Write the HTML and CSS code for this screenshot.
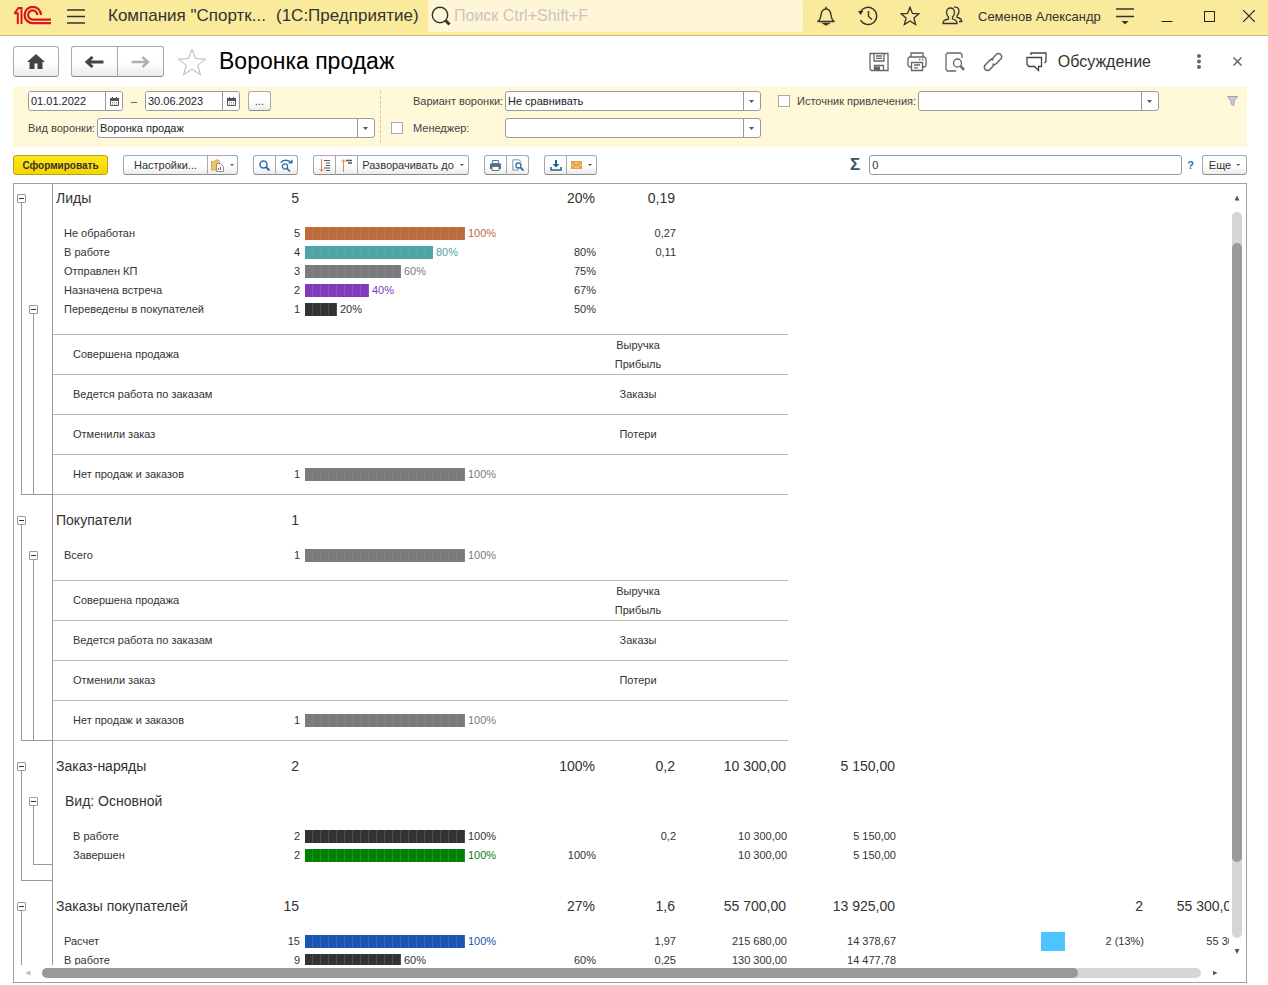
FILE: index.html
```html
<!DOCTYPE html>
<html lang="ru">
<head>
  <meta charset="UTF-8" />
  <meta name="viewport" content="width=device-width, initial-scale=1" />
  <title>Воронка продаж</title>
  <link rel="stylesheet" href="styles.css">
</head>
<body>

  <header class="topbar">
    <svg class="logo" width="38" height="20" viewBox="0 0 38 20" fill="none" stroke="#d9161c">
      <path d="M0 7.200h3.800V18M0 7.200M1 6.500L4.500 2h3v16" stroke-width="2"/>
      <path d="M27 9A8.200 8.200 0 1 0 19 17.200H37" stroke-width="2.200"/>
      <path d="M23.300 9A4.600 4.600 0 1 0 19 13.600H37" stroke-width="2.200"/>
    </svg>
    <button class="icon-btn menu-btn" aria-label="Меню">
      <svg width="18" height="15" viewBox="0 0 18 15" stroke="#333" stroke-width="1.300"><path d="M0 1h18M0 7.500h18M0 14h18"/></svg>
    </button>
    <span class="app-title">Компания "Спортк...</span>
    <span class="app-kind">(1С:Предприятие)</span>
    <label class="search">
      <svg width="20" height="20" viewBox="0 0 20 20" fill="none" stroke="#333"><circle cx="9" cy="9" r="7.700" stroke-width="1.400"/><path d="M14.500 14.500l4 4" stroke-width="3"/></svg>
      <input type="text" placeholder="Поиск Ctrl+Shift+F" aria-label="Поиск">
    </label>
    <button class="icon-btn" aria-label="Уведомления">
      <svg width="20" height="20" viewBox="0 0 20 20" fill="none" stroke="#333" stroke-width="1.400"><path d="M1.500 15.500c2.500-1 3-3 3.500-6.500.4-3.500 2-6 5-6s4.600 2.500 5 6c.5 3.500 1 5.500 3.500 6.500z"/><path d="M10 3V.8"/><path d="M7.500 17.500h5l-2.500 1.500z" fill="#333"/></svg>
    </button>
    <button class="icon-btn" aria-label="История">
      <svg width="20" height="20" viewBox="0 0 20 20" fill="none" stroke="#333" stroke-width="1.400"><path d="M2.200 6.500A8.600 8.600 0 1 1 2.500 14"/><path d="M10.500 5v5.500l3.500 3"/><path d="M0 5h5.500L2.500 9z" fill="#333" stroke="none"/></svg>
    </button>
    <button class="icon-btn" aria-label="Избранное">
      <svg width="20" height="20" viewBox="0 0 20 20" fill="none" stroke="#333" stroke-width="1.300"><path d="M10 1.200l2.400 6.200 6.600.4-5.100 4.200 1.700 6.500L10 14.900l-5.600 3.600 1.700-6.500L1 7.800l6.600-.4z"/></svg>
    </button>
    <button class="icon-btn" aria-label="Пользователи">
      <svg width="21" height="20" viewBox="0 0 21 20" fill="none" stroke="#333" stroke-width="1.300"><path d="M1 17.500h14c0-3-1.500-3.500-4.500-4.500v-2c1.500-1.200 2-2.700 2-4.500C12.500 3.500 10.800 2 8.500 2S4.500 3.500 4.500 6.500c0 1.800.5 3.300 2 4.500v2C2.500 14 1 14.500 1 17.500z"/><path d="M12 1.200c3-.7 5 1 5 4 0 2-.6 3.300-2 4.500v1.500c3 1 4.800 1.500 4.800 4.300H17"/></svg>
    </button>
    <span class="user">Семенов Александр</span>
    <button class="icon-btn" aria-label="Сервис">
      <svg width="18" height="18" viewBox="0 0 18 18"><path d="M0 2h18M0 9.500h18" stroke="#333" stroke-width="1.400"/><path d="M5.500 14h7L9 17.500z" fill="#333"/></svg>
    </button>
    <button class="icon-btn" aria-label="Свернуть">
      <svg width="12" height="14" viewBox="0 0 12 14"><path d="M.5 12.500h11" stroke="#222"/></svg>
    </button>
    <button class="icon-btn" aria-label="Развернуть">
      <svg width="11" height="11" viewBox="0 0 11 11"><rect x=".5" y=".5" width="10" height="10" fill="none" stroke="#222"/></svg>
    </button>
    <button class="icon-btn win-close" aria-label="Закрыть">
      <svg width="12" height="12" viewBox="0 0 12 12"><path d="M0 0l12 12M12 0L0 12" stroke="#222" stroke-width="1.200"/></svg>
    </button>
  </header>

  <main class="page">
    <div class="nav">
      <button class="btn nav-btn" aria-label="Домой">
        <svg width="18" height="15" viewBox="0 0 18 15" fill="#444"><path d="M9 0l9 8h-2.500v7h-5V9.500h-3V15h-5V8H0z"/></svg>
      </button>
      <div class="group nav-group">
        <button class="btn nav-btn" aria-label="Назад">
          <svg width="19" height="12" viewBox="0 0 19 12"><path d="M18.500 6H4M7.500 1L2 6l5.500 5" fill="none" stroke="#444" stroke-width="3"/></svg>
        </button>
        <button class="btn nav-btn" aria-label="Вперед">
          <svg width="19" height="12" viewBox="0 0 19 12"><path d="M.5 6H16M11.500 1L17 6l-5.500 5" fill="none" stroke="#b0b0b0" stroke-width="2.500"/></svg>
        </button>
      </div>
      <button class="star" aria-label="В избранное">
        <svg width="30" height="28" viewBox="0 0 30 28" fill="none" stroke="#b0b6bb"><path d="M15 1.500l3.600 9.200 10 .4-7.900 6.100 2.800 9.600L15 21.300l-8.500 5.500 2.800-9.600-7.900-6.100 10-.4z"/></svg>
      </button>
      <h1>Воронка продаж</h1>
      <button class="icon-btn nav-icon" aria-label="Сохранить">
        <svg width="20" height="20" viewBox="0 0 20 20" fill="none" stroke="#666" stroke-width="1.300"><path d="M1 1.500h18v17H2.500L1 17z"/><path d="M5 1.500v7.500h10V1.500M7 4h6M7 6.300h6M5.500 18.500v-5h9v5"/><path d="M6 14.500h5v4H6z" fill="#666" stroke="none"/></svg>
      </button>
      <button class="icon-btn nav-icon" aria-label="Печать">
        <svg width="20" height="20" viewBox="0 0 20 20" fill="none" stroke="#666" stroke-width="1.300"><path d="M4 5V1h12v4M4.500 15H2.500L1 13.500V6.500L2.500 5h15L19 6.500v7L17.500 15h-2"/><path d="M4.500 10.500h11v8h-11zM7 13h6M7 15.800h4M12 7.500h1.500M15 7.500h1.500"/></svg>
      </button>
      <button class="icon-btn nav-icon" aria-label="Предпросмотр">
        <svg width="20" height="20" viewBox="0 0 20 20" fill="none" stroke="#666" stroke-width="1.300"><path d="M17 6V2.500L15.500 1H2.500L1 2.500v15L2.500 19H11"/><circle cx="12.500" cy="11" r="4"/><path d="M15.500 14l3.500 3.800" stroke-width="2.500"/></svg>
      </button>
      <button class="icon-btn nav-icon" aria-label="Ссылка">
        <svg width="20" height="20" viewBox="0 0 20 20" fill="none" stroke="#666" stroke-width="1.500"><path d="M8.500 7.500l4.700-4.900a3 3 0 0 1 4.500 0 3 3 0 0 1 0 4.500L13.500 11.500c-1.300 1.300-3 1.200-4 .2"/><path d="M11.500 12.500l-4.700 4.900a3 3 0 0 1-4.500 0 3 3 0 0 1 0-4.500L6.500 8.500c1.300-1.300 3-1.200 4-.2"/></svg>
      </button>
      <button class="icon-btn discuss">
        <svg width="21" height="20" viewBox="0 0 21 20" fill="none" stroke="#444" stroke-width="1.300"><path d="M1 5.500h14.500v9H12.500V18.500L8.500 14.500H3L1 12.500z"/><path d="M5 3V1h15v8.500l-1.500 1.500"/></svg>
        Обсуждение
      </button>
      <button class="icon-btn dots" aria-label="Дополнительно">
        <svg width="4" height="15" viewBox="0 0 4 15" fill="#666"><circle cx="2" cy="2" r="2"/><circle cx="2" cy="7.500" r="2"/><circle cx="2" cy="13" r="2"/></svg>
      </button>
      <button class="icon-btn nav-close" aria-label="Закрыть форму">
        <svg width="9" height="9" viewBox="0 0 9 9"><path d="M.5.5l8 8M8.500.5l-8 8" stroke="#666" stroke-width="1.500"/></svg>
      </button>
    </div>

    <div class="filters">
      <div class="filter-col period-col">
        <div class="filter-row">
          <span class="date">
            <input type="text" value="01.01.2022" aria-label="Начало периода">
            <button aria-label="Выбрать дату начала"><svg width="9" height="9" viewBox="0 0 9 9"><path d="M.5 1.500h8v7h-8z" fill="#fff" stroke="#555"/><path d="M0 1h9v3H0zM2 0h1v1H2zM6 0h1v1H6z" fill="#555"/><path d="M2 5.500h5M2 7h5" stroke="#999" stroke-dasharray="1 1"/></svg></button>
          </span>
          <span class="dash">–</span>
          <span class="date">
            <input type="text" value="30.06.2023" aria-label="Конец периода">
            <button aria-label="Выбрать дату окончания"><svg width="9" height="9" viewBox="0 0 9 9"><path d="M.5 1.500h8v7h-8z" fill="#fff" stroke="#555"/><path d="M0 1h9v3H0zM2 0h1v1H2zM6 0h1v1H6z" fill="#555"/><path d="M2 5.500h5M2 7h5" stroke="#999" stroke-dasharray="1 1"/></svg></button>
          </span>
          <button class="btn more-dates">...</button>
        </div>
        <div class="filter-row">
          <label class="kind-label" for="kind">Вид воронки:</label>
          <select id="kind"><option>Воронка продаж</option></select>
        </div>
      </div>
      <div class="divider"></div>
      <div class="filter-col variant-col">
        <div class="filter-row">
          <span class="check-space"></span>
          <label class="variant-label" for="variant">Вариант воронки:</label>
          <select id="variant"><option>Не сравнивать</option></select>
        </div>
        <div class="filter-row">
          <input type="checkbox" aria-label="Отбор по менеджеру">
          <label class="variant-label" for="manager">Менеджер:</label>
          <select id="manager"><option></option></select>
        </div>
      </div>
      <div class="filter-col source-col">
        <div class="filter-row">
          <input type="checkbox" aria-label="Отбор по источнику">
          <label class="source-label" for="source">Источник привлечения:</label>
          <select id="source"><option></option></select>
        </div>
      </div>
      <button class="icon-btn funnel" aria-label="Отборы">
        <svg width="11" height="10" viewBox="0 0 11 10"><path d="M.5.500h10L7 5v4.500L4 8V5z" fill="#c5ccd3" stroke="#9aa5ae"/></svg>
      </button>
    </div>

    <div class="toolbar">
      <button class="btn primary">Сформировать</button>
      <div class="group">
        <button class="btn settings">Настройки...</button>
        <button class="btn wide" aria-label="Варианты настроек">
          <svg width="13" height="13" viewBox="0 0 13 13"><path d="M.5 2.500h3L4.500 1h3l1 1.500V11h-8z" fill="#f3c367" stroke="#d9a548"/><path d="M5.500 4.500h4l3 3v5h-7z" fill="#fff" stroke="#8294a5"/><path d="M7.500 11V9M9.500 11V7.500" stroke="#d04a3a"/></svg>
          <i class="caret"></i>
        </button>
      </div>
      <div class="group">
        <button class="btn small" aria-label="Найти">
          <svg width="11" height="11" viewBox="0 0 11 11" fill="none" stroke="#2a6fa8"><circle cx="4.500" cy="4.500" r="3.500" stroke-width="1.500"/><path d="M7 7l3.500 3.500" stroke-width="2"/></svg>
        </button>
        <button class="btn small" aria-label="Найти далее">
          <svg width="13" height="13" viewBox="0 0 13 13" fill="none" stroke="#2a6fa8"><circle cx="5" cy="7.500" r="2.600" stroke-width="1.200"/><path d="M7 9.500l3 3" stroke-width="1.600"/><path d="M.8 3.500C3.500.5 7.500.6 10 2.800" stroke-width="1.500"/><path d="M7.800 4.500h4.700V.3z" fill="#2a6fa8" stroke="none"/></svg>
        </button>
      </div>
      <div class="group">
        <button class="btn small" aria-label="Развернуть группы">
          <svg width="12" height="13" viewBox="0 0 12 13"><path d="M2.500 0v12M.5 10l2 2.300 2-2.300" fill="none" stroke="#e8824a"/><path d="M5 1.500h6M7 4h4M7 6.500h4M5 9h6M7 11.500h4" stroke="#555"/></svg>
        </button>
        <button class="btn small" aria-label="Свернуть группы">
          <svg width="12" height="13" viewBox="0 0 12 13"><path d="M2.500 1v12M.5 3l2-2.300 2 2.300" fill="none" stroke="#e8824a"/><path d="M5 1.500h6M7 4h4" stroke="#555" stroke-width="1.500"/></svg>
        </button>
        <button class="btn expand">Разворачивать до <i class="caret"></i></button>
      </div>
      <div class="group">
        <button class="btn small" aria-label="Печать отчета">
          <svg width="11" height="11" viewBox="0 0 11 11"><path d="M2.500.5h6v3h-6z" fill="#fff" stroke="#5f7890"/><path d="M0 3.500h11V9H0z" fill="#4d6f92"/><path d="M2 6.500h7v4H2z" fill="#fff" stroke="#5f7890"/></svg>
        </button>
        <button class="btn small" aria-label="Просмотр отчета">
          <svg width="12" height="12" viewBox="0 0 12 12" fill="none"><path d="M7 11H.8V.8h6l3 2.500" stroke="#7c95ab"/><circle cx="6.500" cy="6.500" r="2.500" stroke="#2a6fa8" stroke-width="1.300"/><path d="M8.500 8.500l3 3" stroke="#2a6fa8" stroke-width="1.800"/></svg>
        </button>
      </div>
      <div class="group">
        <button class="btn small" aria-label="Сохранить отчет">
          <svg width="12" height="11" viewBox="0 0 12 11"><path d="M6 0v5" stroke="#20608f" stroke-width="2"/><path d="M2.500 4h7L6 7.500z" fill="#20608f"/><path d="M1 7v3h10V7" fill="none" stroke="#20608f" stroke-width="1.500"/></svg>
        </button>
        <button class="btn wide" aria-label="Отправить">
          <svg width="11" height="8" viewBox="0 0 11 8"><path d="M.5.5h10v7H.5z" fill="#f5c266" stroke="#e0a548"/><path d="M.5.5l5 4 5-4M.5 7.500L4 4M10.500 7.500L7 4" fill="none" stroke="#c98d30"/></svg>
          <i class="caret"></i>
        </button>
      </div>
      <label class="sigma" for="sum">Σ</label>
      <input class="sum" id="sum" type="text" value="0">
      <a class="help" href="#">?</a>
      <button class="btn more">Еще <i class="caret"></i></button>
    </div>

    <div class="report">
      <div class="viewport">
        <table>
          <colgroup>
            <col class="c-tree1"><col class="c-tree2"><col class="c-name"><col class="c-num"><col class="c-bar"><col class="c-conv">
            <col class="c-days"><col class="c-rev"><col class="c-profit"><col class="c-mark"><col class="c-lost"><col class="c-lostsum">
          </colgroup>
          <tbody>
            <tr class="head">
              <td class="branch outer" rowspan="12"><button class="toggle" aria-label="Свернуть"></button></td>
              <td class="inner" rowspan="6"></td>
              <td>Лиды</td><td class="num">5</td><td></td><td class="num">20%</td><td class="num">0,19</td>
            </tr>
            <tr class="sp12"><td colspan="10"></td></tr>
            <tr><td class="lv1">Не обработан</td><td class="num">5</td><td><div class="bar rust"><i style="width:160px"></i>100%</div></td><td></td><td class="num">0,27</td></tr>
            <tr><td class="lv1">В работе</td><td class="num">4</td><td><div class="bar teal"><i style="width:128px"></i>80%</div></td><td class="num">80%</td><td class="num">0,11</td></tr>
            <tr><td class="lv1">Отправлен КП</td><td class="num">3</td><td><div class="bar gray"><i style="width:96px"></i>60%</div></td><td class="num">75%</td></tr>
            <tr><td class="lv1">Назначена встреча</td><td class="num">2</td><td><div class="bar violet"><i style="width:64px"></i>40%</div></td><td class="num">67%</td></tr>
            <tr>
              <td class="branch inner low" rowspan="6"><button class="toggle" aria-label="Свернуть"></button></td>
              <td class="lv1">Переведены в покупателей</td><td class="num">1</td><td><div class="bar dark"><i style="width:32px"></i>20%</div></td><td class="num">50%</td>
            </tr>
            <tr class="sp16"><td class="rule" colspan="6"></td></tr>
            <tr class="tall"><td class="lv2 rule" colspan="4">Совершена продажа</td><td class="mid rule">Выручка<br>Прибыль</td><td class="rule"></td></tr>
            <tr class="tall"><td class="lv2 rule" colspan="4">Ведется работа по заказам</td><td class="mid rule">Заказы</td><td class="rule"></td></tr>
            <tr class="tall"><td class="lv2 rule" colspan="4">Отменили заказ</td><td class="mid rule">Потери</td><td class="rule"></td></tr>
            <tr class="tall"><td class="lv2 rule">Нет продаж и заказов</td><td class="num rule">1</td><td class="rule"><div class="bar gray"><i style="width:160px"></i>100%</div></td><td class="rule" colspan="3"></td></tr>
            <tr class="sp11"><td></td><td class="inner"></td></tr>
          </tbody>
          <tbody>
            <tr class="head">
              <td class="branch outer" rowspan="8"><button class="toggle" aria-label="Свернуть"></button></td>
              <td class="inner" rowspan="2"></td>
              <td>Покупатели</td><td class="num">1</td>
            </tr>
            <tr class="sp12"><td colspan="10"></td></tr>
            <tr>
              <td class="branch inner low" rowspan="6"><button class="toggle" aria-label="Свернуть"></button></td>
              <td class="lv1">Всего</td><td class="num">1</td><td><div class="bar gray"><i style="width:160px"></i>100%</div></td>
            </tr>
            <tr class="sp16"><td class="rule" colspan="6"></td></tr>
            <tr class="tall"><td class="lv2 rule" colspan="4">Совершена продажа</td><td class="mid rule">Выручка<br>Прибыль</td><td class="rule"></td></tr>
            <tr class="tall"><td class="lv2 rule" colspan="4">Ведется работа по заказам</td><td class="mid rule">Заказы</td><td class="rule"></td></tr>
            <tr class="tall"><td class="lv2 rule" colspan="4">Отменили заказ</td><td class="mid rule">Потери</td><td class="rule"></td></tr>
            <tr class="tall"><td class="lv2 rule">Нет продаж и заказов</td><td class="num rule">1</td><td class="rule"><div class="bar gray"><i style="width:160px"></i>100%</div></td><td class="rule" colspan="3"></td></tr>
            <tr class="sp11"><td></td><td class="inner"></td></tr>
          </tbody>
          <tbody>
            <tr class="head">
              <td class="branch outer" rowspan="7"><button class="toggle" aria-label="Свернуть"></button></td>
              <td class="inner" rowspan="2"></td>
              <td>Заказ-наряды</td><td class="num">2</td><td></td><td class="num">100%</td><td class="num">0,2</td><td class="num">10 300,00</td><td class="num">5 150,00</td>
            </tr>
            <tr class="sp7"><td colspan="10"></td></tr>
            <tr class="head">
              <td class="branch inner" rowspan="4"><button class="toggle" aria-label="Свернуть"></button></td>
              <td class="sub">Вид: Основной</td>
            </tr>
            <tr class="sp12"><td colspan="10"></td></tr>
            <tr><td class="lv2">В работе</td><td class="num">2</td><td><div class="bar dark"><i style="width:160px"></i>100%</div></td><td></td><td class="num">0,2</td><td class="num">10 300,00</td><td class="num">5 150,00</td></tr>
            <tr><td class="lv2">Завершен</td><td class="num">2</td><td><div class="bar green"><i style="width:160px"></i>100%</div></td><td class="num">100%</td><td></td><td class="num">10 300,00</td><td class="num">5 150,00</td></tr>
            <tr class="sp16"><td class="inner closing"></td></tr>
            <tr class="sp11"><td></td><td class="inner"></td></tr>
          </tbody>
          <tbody>
            <tr class="head">
              <td class="branch outer open" rowspan="5"><button class="toggle" aria-label="Свернуть"></button></td>
              <td class="inner" rowspan="5"></td>
              <td>Заказы покупателей</td><td class="num">15</td><td></td><td class="num">27%</td><td class="num">1,6</td><td class="num">55 700,00</td><td class="num">13 925,00</td><td></td><td class="num">2</td><td class="num">55 300,00</td>
            </tr>
            <tr class="sp12"><td colspan="10"></td></tr>
            <tr><td class="lv1">Расчет</td><td class="num">15</td><td><div class="bar blue"><i style="width:160px"></i>100%</div></td><td></td><td class="num">1,97</td><td class="num">215 680,00</td><td class="num">14 378,67</td><td><div class="mark"></div></td><td class="num">2 (13%)</td><td class="num">55 300</td></tr>
            <tr><td class="lv1">В работе</td><td class="num">9</td><td><div class="bar dark"><i style="width:96px"></i>60%</div></td><td class="num">60%</td><td class="num">0,25</td><td class="num">130 300,00</td><td class="num">14 477,78</td></tr>
            <tr class="sp16"><td colspan="10"></td></tr>
          </tbody>
        </table>
      </div>
      <div class="vscroll">
        <span class="arrow up"></span>
        <div class="track"><div class="thumb"></div></div>
        <span class="arrow down"></span>
      </div>
      <div class="hscroll">
        <span class="arrow left"></span>
        <div class="track"><div class="thumb"></div></div>
        <span class="arrow right"></span>
      </div>
    </div>
  </main>

</body>
</html>
```

FILE: styles.css
```css
* {
  box-sizing: border-box;
}

body {
  margin: 0;
  height: 100vh;
  display: flex;
  flex-direction: column;
  font-family: "Liberation Sans", Arial, sans-serif;
  font-size: 11px;
  color: #333;
  background: #fff;
  overflow: hidden;
}

button, input, select {
  font-family: inherit;
  font-size: inherit;
  color: inherit;
  margin: 0;
}

svg {
  display: block;
  flex: none;
}

.icon-btn {
  display: flex;
  align-items: center;
  justify-content: center;
  flex: none;
  width: 42px;
  padding: 0;
  border: none;
  background: none;
}

/* top bar */
.topbar {
  display: flex;
  align-items: center;
  flex: none;
  height: 36px;
  padding-bottom: 3px;
  background: #faea9c;
  border-bottom: 1px solid #cbbb62;
}

.logo {
  margin-left: 14px;
}

.menu-btn {
  width: 48px;
}

.app-title {
  margin-left: 8px;
  width: 168px;
  font-size: 17px;
  white-space: nowrap;
}

.app-kind {
  width: 152px;
  font-size: 17px;
  white-space: nowrap;
}

.search {
  display: flex;
  align-items: center;
  align-self: stretch;
  flex: 1;
  min-width: 0;
  margin-right: 2px;
  padding-left: 3px;
  background: #fef6d6;
  border-radius: 3px;
}

.search input {
  flex: 1;
  min-width: 0;
  border: none;
  padding: 0 3px;
  background: none;
  font-size: 16px;
}

.search input::placeholder {
  color: #c8c6c0;
}

.user {
  width: 131px;
  padding-left: 5px;
  font-size: 13px;
  white-space: nowrap;
}

.win-close {
  width: 38px;
}

/* form header */
.page {
  display: flex;
  flex-direction: column;
  flex: 1;
  min-height: 0;
  padding: 10px 21px 2px 13px;
}

.btn {
  display: flex;
  align-items: center;
  justify-content: center;
  flex: none;
  height: 20px;
  padding: 0;
  border: 1px solid #a8a8a8;
  border-bottom-color: #8a8a8a;
  border-radius: 3px;
  background: linear-gradient(#fff 50%, #ececec);
  white-space: nowrap;
}

.group {
  display: flex;
  flex: none;
}

.group .btn + .btn {
  margin-left: -1px;
  border-top-left-radius: 0;
  border-bottom-left-radius: 0;
}

.group .btn:not(:last-child) {
  border-top-right-radius: 0;
  border-bottom-right-radius: 0;
}

.nav {
  display: flex;
  align-items: center;
  flex: none;
  height: 31px;
  margin-bottom: 10px;
}

.nav-btn {
  width: 46px;
  height: 31px;
}

.nav-group {
  margin-left: 12px;
}

.nav-group .nav-btn {
  width: 47px;
}

.star {
  margin-left: 13px;
  padding: 0;
  border: none;
  background: none;
}

h1 {
  flex: 1;
  margin: 0 0 0 12px;
  font-size: 23px;
  font-weight: normal;
  color: #000;
}

.nav-icon {
  width: 38px;
}

.discuss {
  width: auto;
  gap: 11px;
  margin-left: 14px;
  font-size: 16px;
}

.dots {
  width: 38px;
  margin-left: 29px;
}

.nav-close {
  width: 38px;
  margin-right: -9px;
}

/* filters */
.filters {
  display: flex;
  flex: none;
  height: 60px;
  margin-bottom: 8px;
  padding: 4px 9px 4px 15px;
  background: #fff8d9;
  color: #444;
}

.filter-col {
  display: flex;
  flex-direction: column;
  gap: 7px;
  min-width: 0;
}

.period-col { flex: 347; }
.variant-col { flex: 370; }
.source-col { flex: 381; margin-left: 17px; }

.filter-row {
  display: flex;
  align-items: center;
  height: 20px;
  white-space: nowrap;
}

.divider {
  margin: 0 10px 0 5px;
  border-left: 1px dashed #ccc8b0;
}

.date {
  display: flex;
  width: 95px;
  height: 20px;
  border: 1px solid #9a9a9a;
  border-radius: 3px;
  background: #fff;
  overflow: hidden;
}

.date input {
  flex: 1;
  min-width: 0;
  padding: 0 2px;
  border: none;
  color: #222;
}

.date button {
  display: flex;
  align-items: center;
  justify-content: center;
  width: 17px;
  padding: 0;
  border: none;
  border-left: 1px solid #9a9a9a;
  background: #fff;
}

.dash {
  width: 22px;
  text-align: center;
}

.more-dates {
  width: 23px;
  margin-left: 8px;
}

.filter-row select {
  flex: 1;
  min-width: 0;
  height: 20px;
  padding: 0 20px 0 2px;
  border: 1px solid #9a9a9a;
  border-radius: 3px;
  appearance: none;
  color: #222;
  background:
    url("data:image/svg+xml,%3Csvg xmlns='http://www.w3.org/2000/svg' width='5' height='3'%3E%3Cpath d='M0 0h5L2.500 3z' fill='%23555'/%3E%3C/svg%3E") no-repeat right 6px center,
    linear-gradient(#9a9a9a, #9a9a9a) no-repeat right 16px top / 1px 100%,
    #fff;
}

.filter-row input[type="checkbox"] {
  flex: none;
  width: 12px;
  height: 12px;
  appearance: none;
  border: 1px solid #aaa;
  background: #fff;
}

.check-space {
  width: 12px;
}

.kind-label { width: 69px; }
.variant-label { width: 92px; margin-left: 10px; }
.source-label { width: 121px; margin-left: 7px; }

.funnel {
  align-self: flex-start;
  width: 11px;
  height: 20px;
  margin-left: 68px;
}

/* report toolbar */
.toolbar {
  display: flex;
  align-items: center;
  flex: none;
  gap: 15px;
  height: 20px;
  margin-bottom: 8px;
}

.primary {
  width: 95px;
  border-color: #b8a21c;
  background: linear-gradient(#ffe81a, #f5d300);
  font-size: 10px;
  font-weight: bold;
}

.small { width: 23px; }
.wide { width: 31px; gap: 6px; }
.settings { width: 85px; }
.expand { width: 112px; gap: 6px; }

.caret {
  width: 4px;
  height: 2px;
  background: #555;
  clip-path: polygon(0 0, 100% 0, 50% 100%);
}

.sigma {
  margin-left: auto;
  font-size: 17px;
  font-weight: bold;
  color: #3f5061;
}

.sum {
  width: 313px;
  height: 20px;
  margin-left: -6px;
  padding: 0 2px;
  border: 1px solid #9a9a9a;
  border-radius: 3px;
}

.help {
  margin: 0 -7px 0 -10px;
  font-weight: bold;
  color: #1a78b8;
  text-decoration: none;
}

.more {
  width: 45px;
  gap: 5px;
}

/* report */
.report {
  display: grid;
  grid-template-columns: minmax(0, 1fr) 17px;
  grid-template-rows: minmax(0, 1fr) 17px;
  flex: 1;
  min-height: 0;
  border: 1px solid #a0a0a0;
}

.viewport {
  overflow: hidden;
}

table {
  width: 1227px;
  table-layout: fixed;
  border-collapse: separate;
  border-spacing: 0;
}

.c-tree1 { width: 13px; }
.c-tree2 { width: 26px; }
.c-name { width: 208px; }
.c-num { width: 40px; }
.c-bar { width: 236px; }
.c-conv { width: 60px; }
.c-days { width: 80px; }
.c-rev { width: 111px; }
.c-profit { width: 109px; }
.c-mark { width: 170px; }
.c-lost { width: 78px; }
.c-lostsum { width: 96px; }

td {
  height: 19px;
  padding: 0;
  line-height: 19px;
  white-space: nowrap;
}

.head td {
  height: 28px;
  padding-left: 3px;
  font-size: 14px;
}

.sp7 td { height: 7px; line-height: 0; }
.sp11 td { height: 11px; line-height: 0; }
.sp12 td { height: 12px; line-height: 0; }
.sp16 td { height: 16px; line-height: 0; }
.tall td { height: 40px; }

td.num {
  padding-right: 1px;
  text-align: right;
}

.head td.num {
  padding-right: 2px;
}

td.lv1 { padding-left: 11px; }
td.lv2 { padding-left: 20px; }
.head td.sub { padding-left: 12px; }

td.mid {
  padding-left: 2px;
  text-align: center;
}

td.rule {
  border-bottom: 1px solid #b8b8b8;
}

/* group tree: vertical line under the toggle, elbow at the end */
td.inner {
  border-right: 1px solid #999;
}

td.branch {
  height: auto;
  padding: 10px 0 0 3px;
  vertical-align: top;
  line-height: 0;
}

td.branch.inner {
  padding-left: 2px;
}

td.branch.low {
  padding-top: 5px;
}

td.outer {
  background:
    linear-gradient(#999, #999) no-repeat 7px 14px / 1px 100%,
    linear-gradient(#999, #999) no-repeat 7px bottom / 100% 1px;
}

td.outer.open {
  background: linear-gradient(#999, #999) no-repeat 7px 14px / 1px 100%;
}

td.branch.inner {
  background:
    linear-gradient(#999, #999) no-repeat 6px 14px / 1px 100%,
    linear-gradient(#999, #999) no-repeat left bottom / 100% 1px;
}

tr.head td.branch.inner {
  background:
    linear-gradient(#999, #999) no-repeat 6px 14px / 1px 100%,
    linear-gradient(#999, #999) no-repeat 6px bottom / 100% 1px;
}

td.closing {
  border-bottom: 1px solid #999;
}

.toggle {
  display: block;
  width: 9px;
  height: 9px;
  padding: 0;
  border: 1px solid #999;
  border-radius: 1px;
  background: linear-gradient(#333, #333) no-repeat center / 5px 1px, #fff;
}

/* funnel bars */
.bar {
  display: flex;
  align-items: center;
  gap: 3px;
  height: 19px;
  padding-left: 4px;
}

.bar i {
  height: 13px;
  background: repeating-linear-gradient(90deg, transparent 0 7px, rgba(120, 170, 210, 0.25) 7px 8px) currentColor;
}

.rust { color: #bf6a38; }
.teal { color: #4fa5a5; }
.gray { color: #7b7b7b; }
.violet { color: #8339b9; }
.dark { color: #333; }
.green { color: #008200; }
.blue { color: #1b53b0; }

.mark {
  width: 24px;
  height: 19px;
  margin-left: 144px;
  background: #4dc6ff;
}

/* scroll bars */
.vscroll {
  display: grid;
  grid-template-rows: 28px 1fr 27px;
  justify-items: center;
  align-items: center;
  padding-right: 1px;
}

.hscroll {
  display: grid;
  grid-template-columns: 28px 1fr 28px;
  justify-items: center;
  align-items: center;
  padding-bottom: 1px;
}

.track {
  display: grid;
  border-radius: 5px;
  background: #d5d5d5;
}

.thumb {
  border-radius: 5px;
  background: #999;
}

.vscroll .track {
  width: 10px;
  height: 100%;
  grid-template-rows: 31fr 619fr 76fr;
}

.vscroll .thumb {
  grid-row: 2;
}

.hscroll .track {
  width: 100%;
  height: 10px;
  grid-template-columns: 1036fr 123fr;
}

.arrow {
  width: 5px;
  height: 5px;
  background: #555;
}

.up { clip-path: polygon(50% 0, 100% 100%, 0 100%); }
.down { clip-path: polygon(0 0, 100% 0, 50% 100%); }
.left { clip-path: polygon(0 50%, 100% 0, 100% 100%); background: #bbb; }
.right { clip-path: polygon(0 0, 100% 50%, 0 100%); }
```
